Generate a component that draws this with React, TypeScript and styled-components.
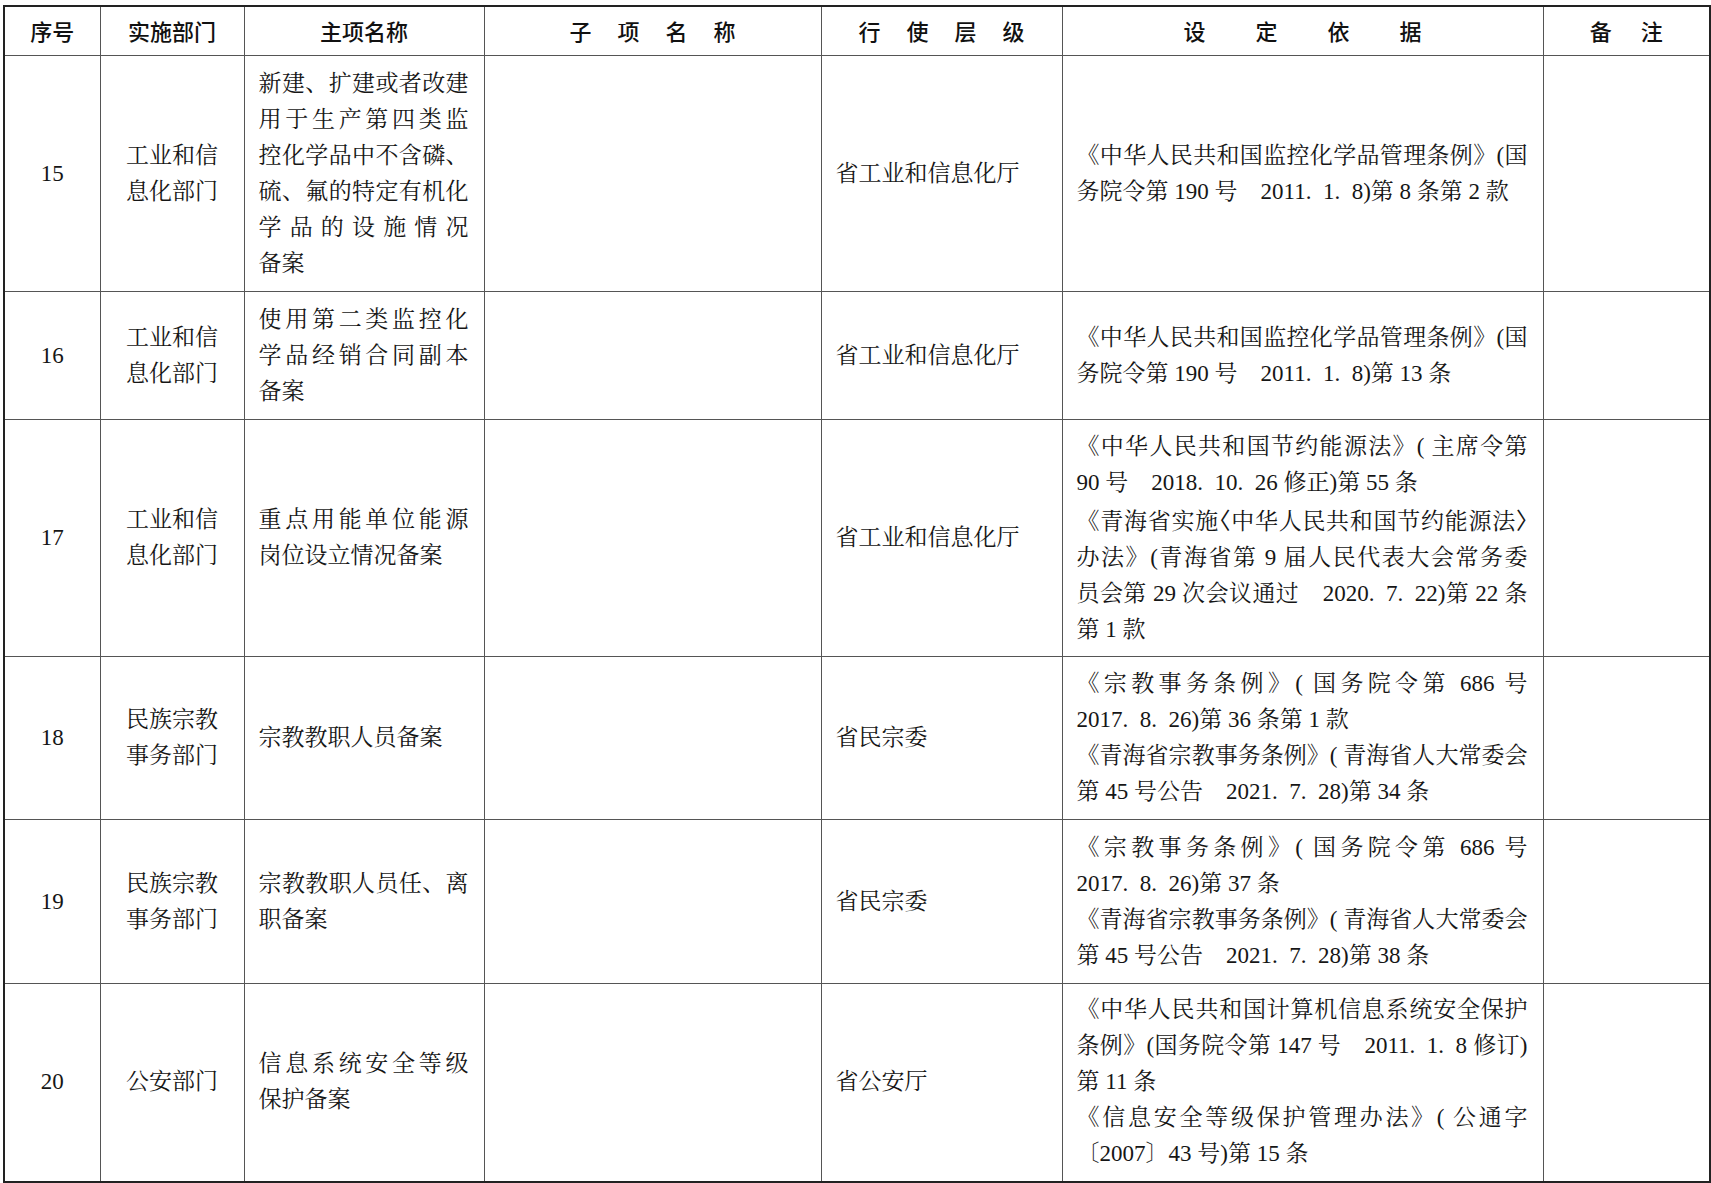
import React from 'react';
import styled, { createGlobalStyle } from 'styled-components';

const GlobalStyle = createGlobalStyle`
  html,
  body {
    margin: 0;
    padding: 0;
    background: #fff;
  }
  body {
    font-family: 'Liberation Serif', 'Noto Serif CJK SC', 'Noto Sans CJK SC', serif;
    color: #161616;
  }
`;

const Sheet = styled.table`
  margin: 5px 0 0 3px;
  width: 1706px;
  border-collapse: collapse;
  table-layout: fixed;
  border: 2px solid #222;
`;

const HeadCell = styled.th`
  height: 45px;
  padding: 0 0 3px;
  border: 1px solid #555;
  font-family: 'Noto Sans CJK SC', sans-serif;
  font-weight: 500;
  font-size: 22px;
  line-height: 1;
  color: #111;
  vertical-align: middle;
`;

const Label = styled.div<{ $gap: number }>`
  display: flex;
  justify-content: center;
  gap: ${(p) => p.$gap}px;
`;

const BodyRow = styled.tr<{ $h: number }>`
  height: ${(p) => p.$h}px;
`;

const Cell = styled.td<{ $center?: boolean }>`
  padding: 0 ${(p) => (p.$center ? '0' : '15px 0 14px')};
  border: 1px solid #555;
  vertical-align: middle;
  text-align: ${(p) => (p.$center ? 'center' : 'left')};
  font-size: 23px;
  line-height: 36px;
`;

const Line = styled.div<{ $fill?: boolean }>`
  white-space: nowrap;
  text-align: ${(p) => (p.$fill ? 'justify' : 'left')};
  text-align-last: ${(p) => (p.$fill ? 'justify' : 'left')};
`;

const CenterLine = styled.div`
  white-space: nowrap;
`;

const Narrow = styled.span`
  font-family: 'Noto Sans CJK SC', sans-serif;
  font-feature-settings: 'halt';
`;

const WIDTHS = [96, 144, 240, 337, 241, 481, 167];

const HEADERS: { text: string; gap: number }[] = [
  { text: '序号', gap: 0 },
  { text: '实施部门', gap: 0 },
  { text: '主项名称', gap: 0 },
  { text: '子项名称', gap: 26 },
  { text: '行使层级', gap: 26 },
  { text: '设定依据', gap: 50 },
  { text: '备注', gap: 29 },
];

const G = '\u3000';
const E = '\u2002';

type Entry = {
  no: string;
  height: number;
  dept: string[];
  item: string[][];
  level: string;
  basis: string[][];
};

const ROWS: Entry[] = [
  {
    no: '15',
    height: 236,
    dept: ['工业和信', '息化部门'],
    item: [['新建、扩建或者改建', '用于生产第四类监', '控化学品中不含磷、', '硫、氟的特定有机化', '学品的设施情况', '备案']],
    level: '省工业和信息化厅',
    basis: [['《中华人民共和国监控化学品管理条例》(国', `务院令第 190 号${G}2011.${E}1.${E}8)第 8 条第 2 款`]],
  },
  {
    no: '16',
    height: 128,
    dept: ['工业和信', '息化部门'],
    item: [['使用第二类监控化', '学品经销合同副本', '备案']],
    level: '省工业和信息化厅',
    basis: [['《中华人民共和国监控化学品管理条例》(国', `务院令第 190 号${G}2011.${E}1.${E}8)第 13 条`]],
  },
  {
    no: '17',
    height: 237,
    dept: ['工业和信', '息化部门'],
    item: [['重点用能单位能源', '岗位设立情况备案']],
    level: '省工业和信息化厅',
    basis: [
      ['《中华人民共和国节约能源法》( 主席令第', `90 号${G}2018.${E}10.${E}26 修正)第 55 条`],
      [
        '《青海省实施〈中华人民共和国节约能源法〉',
        '办法》(青海省第 9 届人民代表大会常务委',
        `员会第 29 次会议通过${G}2020.${E}7.${E}22)第 22 条`,
        '第 1 款',
      ],
    ],
  },
  {
    no: '18',
    height: 163,
    dept: ['民族宗教', '事务部门'],
    item: [['宗教教职人员备案']],
    level: '省民宗委',
    basis: [
      ['《宗教事务条例》( 国务院令第 686 号', `2017.${E}8.${E}26)第 36 条第 1 款`],
      ['《青海省宗教事务条例》( 青海省人大常委会', `第 45 号公告${G}2021.${E}7.${E}28)第 34 条`],
    ],
  },
  {
    no: '19',
    height: 164,
    dept: ['民族宗教', '事务部门'],
    item: [['宗教教职人员任、离', '职备案']],
    level: '省民宗委',
    basis: [
      ['《宗教事务条例》( 国务院令第 686 号', `2017.${E}8.${E}26)第 37 条`],
      ['《青海省宗教事务条例》( 青海省人大常委会', `第 45 号公告${G}2021.${E}7.${E}28)第 38 条`],
    ],
  },
  {
    no: '20',
    height: 198,
    dept: ['公安部门'],
    item: [['信息系统安全等级', '保护备案']],
    level: '省公安厅',
    basis: [
      ['《中华人民共和国计算机信息系统安全保护', `条例》(国务院令第 147 号${G}2011.${E}1.${E}8 修订)`, '第 11 条'],
      ['《信息安全等级保护管理办法》( 公通字', '〔2007〕43 号)第 15 条'],
    ],
  },
];

// 〈 〉 are set half-width so the long line fits the column
function renderText(text: string) {
  const parts = text.split(/([〈〉])/);
  return parts.map((part, i) =>
    part === '〈' || part === '〉' ? <Narrow key={i}>{part}</Narrow> : <React.Fragment key={i}>{part}</React.Fragment>
  );
}

function Paragraphs({ paras }: { paras: string[][] }) {
  return (
    <>
      {paras.map((lines, p) =>
        lines.map((line, i) => (
          <Line key={`${p}-${i}`} $fill={i < lines.length - 1}>
            {renderText(line)}
          </Line>
        ))
      )}
    </>
  );
}

export default function App() {
  return (
    <>
      <GlobalStyle />
      <Sheet>
        <colgroup>
          {WIDTHS.map((w, i) => (
            <col key={i} style={{ width: w }} />
          ))}
        </colgroup>
        <thead>
          <tr>
            {HEADERS.map((h) => (
              <HeadCell key={h.text}>
                <Label $gap={h.gap}>
                  {h.text.split('').map((c, i) => (
                    <span key={i}>{c}</span>
                  ))}
                </Label>
              </HeadCell>
            ))}
          </tr>
        </thead>
        <tbody>
          {ROWS.map((row) => (
            <BodyRow key={row.no} $h={row.height}>
              <Cell $center>{row.no}</Cell>
              <Cell $center>
                {row.dept.map((d) => (
                  <CenterLine key={d}>{d}</CenterLine>
                ))}
              </Cell>
              <Cell>
                <Paragraphs paras={row.item} />
              </Cell>
              <Cell />
              <Cell>{row.level}</Cell>
              <Cell>
                <Paragraphs paras={row.basis} />
              </Cell>
              <Cell />
            </BodyRow>
          ))}
        </tbody>
      </Sheet>
    </>
  );
}
